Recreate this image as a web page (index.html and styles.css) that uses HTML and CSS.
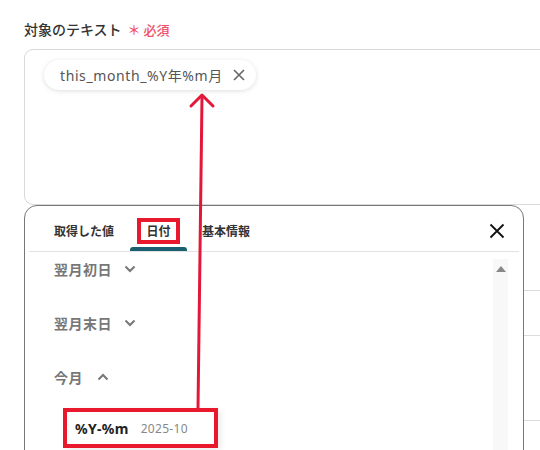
FILE: index.html
```html
<!DOCTYPE html>
<html lang="ja">
<head>
<meta charset="utf-8">
<link rel="stylesheet" href="styles.css">
</head>
<body>
<div class="page">
  <div class="label">対象のテキスト<span class="req">＊ 必須</span></div>
  <div class="field">
    <div class="chip">this_month_%Y年%m月
      <svg class="chip-x" width="12" height="12" viewBox="0 0 12 12"><path d="M1 1L11 11M11 1L1 11" stroke="#666" stroke-width="1.6" fill="none"/></svg>
    </div>
  </div>
  <div class="under">
    <div class="urow r1"></div>
    <div class="urow r2"></div>
    <div class="urow r3"></div>
    <div class="urow r4"></div>
  </div>
</div>

<div class="popup">
  <div class="tabs">
    <div class="tab">取得した値</div>
    <div class="tab active"><span class="mark">日付</span></div>
    <div class="tab">基本情報</div>
    <svg class="close" width="16" height="16" viewBox="0 0 16 16"><path d="M1.5 1.5L14.5 14.5M14.5 1.5L1.5 14.5" stroke="#111" stroke-width="1.8" fill="none"/></svg>
  </div>
  <div class="body">
    <div class="list">
      <div class="item">翌月初日<svg class="chev" width="12" height="8" viewBox="0 0 12 8"><path d="M1.5 1.5L6 6L10.5 1.5" stroke="#777" stroke-width="2" fill="none"/></svg></div>
      <div class="item">翌月末日<svg class="chev" width="12" height="8" viewBox="0 0 12 8"><path d="M1.5 1.5L6 6L10.5 1.5" stroke="#777" stroke-width="2" fill="none"/></svg></div>
      <div class="item">今月<svg class="chev up" width="12" height="8" viewBox="0 0 12 8"><path d="M1.5 6.5L6 2L10.5 6.5" stroke="#777" stroke-width="2" fill="none"/></svg></div>
      <div class="opt"><span class="key">%Y-%m</span><span class="val">2025-10</span></div>
    </div>
    <div class="scroll"><span class="tri"></span></div>
  </div>
</div>

<svg class="arrow" width="540" height="450" viewBox="0 0 540 450">
  <path d="M198 409L202 97" stroke="#e3173a" stroke-width="3" fill="none"/>
  <path d="M191 106L202 95L213 106" stroke="#e3173a" stroke-width="3" fill="none" stroke-linecap="round" stroke-linejoin="round"/>
</svg>
</body>
</html>
```
FILE: styles.css
```css
html, body {
  margin: 0;
  padding: 0;
  background: #fff;
  width: 540px;
  height: 450px;
  overflow: hidden;
  font-family: "Noto Sans", "Noto Sans CJK JP", sans-serif;
}
.page {
  padding: 19px 0 0 24px;
  position: relative;
}
.label {
  font-size: 14px;
  font-weight: 500;
  color: #333;
  height: 20px;
  line-height: 20px;
  font-family: "Noto Sans CJK JP", sans-serif;
  margin-bottom: 10px;
}
.req {
  color: #f0506a;
  font-size: 13px;
  margin-left: 6px;
}
.field {
  width: 620px;
  border: 1px solid #dadada;
  border-radius: 9px;
  box-sizing: border-box;
  padding: 10px 0 0 19px;
  height: 156px;
}
.chip {
  display: inline-flex;
  align-items: center;
  height: 30px;
  padding: 0 11px 0 16px;
  border-radius: 15px;
  background: #fff;
  box-shadow: 0 1px 5px rgba(0,0,0,0.13);
  font-size: 14px;
  color: #555;
  letter-spacing: 0.6px;
  font-family: "Noto Sans", "Noto Sans CJK JP", sans-serif;
}
.chip-x {
  margin-left: 10px;
}
.under {
  width: 600px;
}
.urow {
  border-top: 1px solid #dcdcdc;
  box-sizing: border-box;
}
.r1 { height: 85px; border-top: none; }
.r2 { height: 45px; }
.r3 { height: 85px; }
.r4 { height: 40px; }

.popup {
  position: absolute;
  left: 24px;
  top: 205px;
  width: 500px;
  height: 270px;
  box-sizing: border-box;
  border: 1px solid #777;
  border-radius: 13px;
  background: #fff;
  font-family: "Noto Sans CJK JP", sans-serif;
}
.tabs {
  display: flex;
  align-items: stretch;
  height: 45px;
  margin: 0 4px;
  border-bottom: 1px solid #e2e2e2;
  padding-left: 25px;
  position: relative;
}
.tab {
  font-size: 12px;
  font-weight: 700;
  color: #333;
  display: flex;
  align-items: center;
  padding-top: 4px;
  box-sizing: border-box;
}
.tab:first-child { width: 76px; }
.tab.active {
  width: 57px;
  justify-content: center;
  position: relative;
  margin-right: 15px;
}
.tab.active::after {
  content: "";
  position: absolute;
  left: 0;
  right: 0;
  bottom: 0;
  height: 4px;
  border-radius: 3px 3px 0 0;
  background: #1a5f70;
}
.mark {
  border: 4px solid #e8192c;
  padding: 1px 5px;
  line-height: 16px;
}
.close {
  position: absolute;
  right: 14px;
  top: 17px;
}
.body {
  display: flex;
  padding-left: 29px;
}
.list {
  flex: 1;
  display: flex;
  flex-direction: column;
  margin-top: -10px;
}
.item {
  height: 54px;
  flex: none;
  display: flex;
  align-items: center;
  font-size: 14px;
  font-weight: 700;
  color: #777;
  letter-spacing: 0.5px;
}
.chev { margin-left: 12px; }
.chev.up { margin-left: 14px; }
.opt {
  align-self: flex-start;
  margin-top: 4px;
  margin-left: 9px;
  display: flex;
  align-items: center;
  height: 32px;
  padding: 0 26px 0 8px;
  border: 4px solid #e8192c;
  background: #fff;
  box-shadow: 3px 2px 6px rgba(0,0,0,0.08);
}
.key {
  font-size: 14px;
  font-weight: 700;
  color: #222;
  font-family: "Noto Sans", sans-serif;
  letter-spacing: 0.3px;
}
.val {
  font-size: 12px;
  color: #888;
  margin-left: 12px;
  font-family: "Noto Sans", sans-serif;
  letter-spacing: 0.3px;
}
.scroll {
  width: 15px;
  margin: 7px 15px 0 0;
  height: 200px;
  background: #f8f8f8;
  display: flex;
  justify-content: center;
  padding-top: 7px;
  box-sizing: border-box;
}
.tri {
  width: 0;
  height: 0;
  border-left: 5px solid transparent;
  border-right: 5px solid transparent;
  border-bottom: 6px solid #888;
}
.arrow {
  position: absolute;
  left: 0;
  top: 0;
  pointer-events: none;
}
```
